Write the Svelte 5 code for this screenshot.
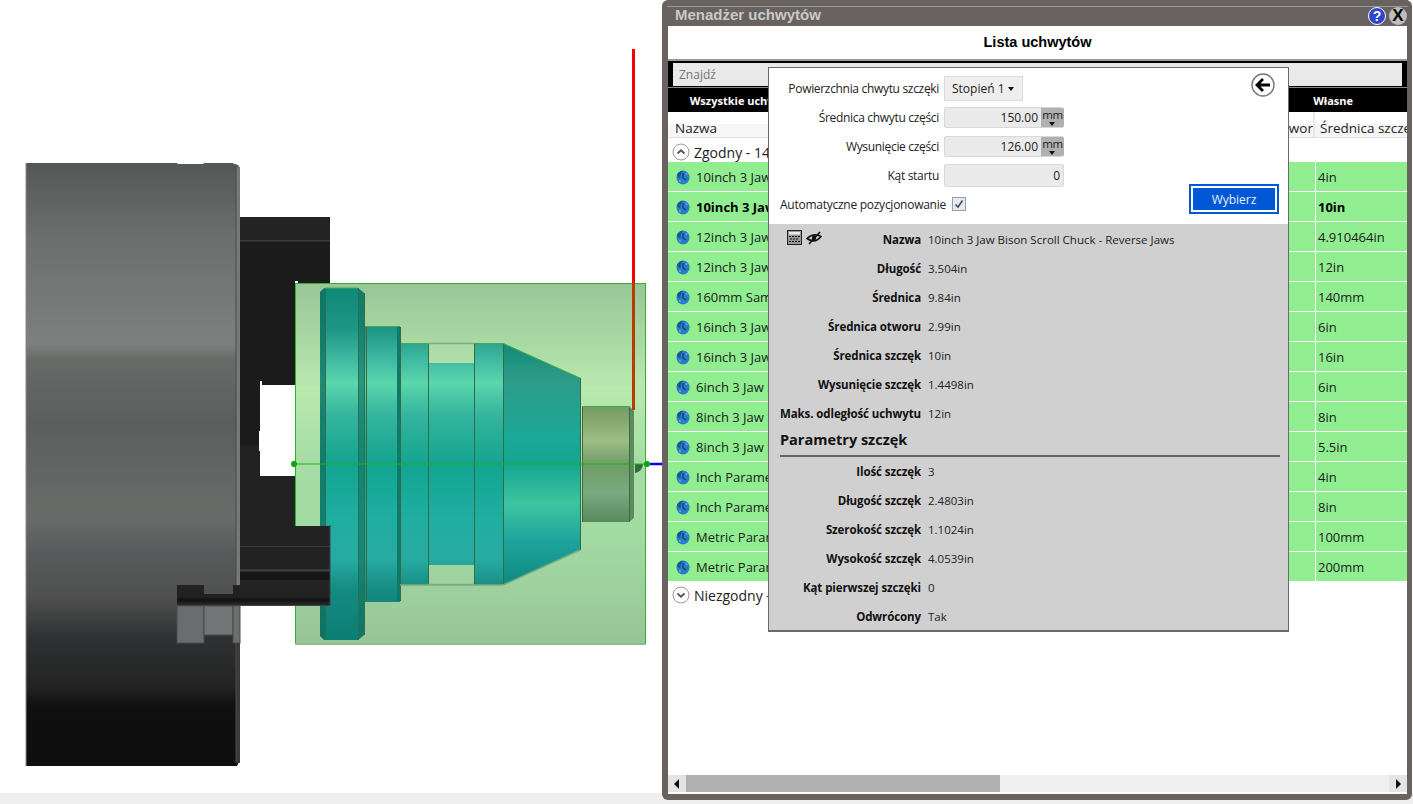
<script>
  const rows = [
    ['10inch 3 Jaw Bison Scroll Chuck', '4in', false],
    ['10inch 3 Jaw Bison Scroll Chuck - Reverse Jaws', '10in', true],
    ['12inch 3 Jaw Scroll Chuck', '4.910464in', false],
    ['12inch 3 Jaw Scroll Chuck - Reverse', '12in', false],
    ['160mm Sample Chuck', '140mm', false],
    ['16inch 3 Jaw Scroll Chuck', '6in', false],
    ['16inch 3 Jaw Scroll Chuck - Reverse', '16in', false],
    ['6inch 3 Jaw Scroll Chuck', '6in', false],
    ['8inch 3 Jaw Scroll Chuck', '8in', false],
    ['8inch 3 Jaw Scroll Chuck - Reverse', '5.5in', false],
    ['Inch Parametric Chuck', '4in', false],
    ['Inch Parametric Chuck - Reverse', '8in', false],
    ['Metric Parametric Chuck', '100mm', false],
    ['Metric Parametric Chuck - Reverse', '200mm', false]
  ];
  const general = [
    ['Nazwa', '10inch 3 Jaw Bison Scroll Chuck - Reverse Jaws'],
    ['Długość', '3.504in'],
    ['Średnica', '9.84in'],
    ['Średnica otworu', '2.99in'],
    ['Średnica szczęk', '10in'],
    ['Wysunięcie szczęk', '1.4498in'],
    ['Maks. odległość uchwytu', '12in']
  ];
  const jaws = [
    ['Ilość szczęk', '3'],
    ['Długość szczęk', '2.4803in'],
    ['Szerokość szczęk', '1.1024in'],
    ['Wysokość szczęk', '4.0539in'],
    ['Kąt pierwszej szczęki', '0'],
    ['Odwrócony', 'Tak']
  ];
  const tabs = ['Wszystkie uchwyty', 'Tokarskie', 'Frezarskie', 'Domyślne', 'Własne'];
  const teal = 'url(#teal)';
</script>

<div class="page">
  <div class="top">
    <svg class="scene" width="662" height="793" viewBox="0 0 662 793">
      <defs>
        <linearGradient id="body" gradientUnits="userSpaceOnUse" x1="0" y1="163" x2="0" y2="766">
          <stop offset="0" stop-color="#555757"/>
          <stop offset="0.04" stop-color="#5d5f5f"/>
          <stop offset="0.12" stop-color="#6c6e6e"/>
          <stop offset="0.3" stop-color="#7e807f"/>
          <stop offset="0.325" stop-color="#686a68"/>
          <stop offset="0.43" stop-color="#5c5e5e"/>
          <stop offset="0.59" stop-color="#6a6c6a"/>
          <stop offset="0.63" stop-color="#5c5e5f"/>
          <stop offset="0.72" stop-color="#4e4f4e"/>
          <stop offset="0.79" stop-color="#2f3031"/>
          <stop offset="0.87" stop-color="#222322"/>
          <stop offset="0.9" stop-color="#101010"/>
          <stop offset="1" stop-color="#0e0e0e"/>
        </linearGradient>
        <linearGradient id="box" gradientUnits="userSpaceOnUse" x1="0" y1="283" x2="0" y2="645">
          <stop offset="0" stop-color="#99c598"/>
          <stop offset="0.15" stop-color="#a8d8a2"/>
          <stop offset="0.29" stop-color="#b9e9af"/>
          <stop offset="0.5" stop-color="#a6dda4"/>
          <stop offset="0.7" stop-color="#a2dba2"/>
          <stop offset="1" stop-color="#98c498"/>
        </linearGradient>
        <linearGradient id="teal" gradientUnits="userSpaceOnUse" x1="0" y1="288" x2="0" y2="640">
          <stop offset="0" stop-color="#0f8877"/>
          <stop offset="0.12" stop-color="#1f9786"/>
          <stop offset="0.2" stop-color="#3fb8a0"/>
          <stop offset="0.27" stop-color="#5ad6ad"/>
          <stop offset="0.36" stop-color="#35b59d"/>
          <stop offset="0.5" stop-color="#13a491"/>
          <stop offset="0.66" stop-color="#20aea0"/>
          <stop offset="0.77" stop-color="#27aba2"/>
          <stop offset="0.86" stop-color="#148a80"/>
          <stop offset="1" stop-color="#0c7e74"/>
        </linearGradient>
        <linearGradient id="cone" gradientUnits="userSpaceOnUse" x1="0" y1="343" x2="0" y2="585">
          <stop offset="0" stop-color="#128a78"/>
          <stop offset="0.15" stop-color="#2d9c88"/>
          <stop offset="0.4" stop-color="#1aa896"/>
          <stop offset="0.5" stop-color="#14a592"/>
          <stop offset="0.66" stop-color="#3ec4a0"/>
          <stop offset="0.82" stop-color="#1ea39c"/>
          <stop offset="1" stop-color="#0f8a80"/>
        </linearGradient>
        <linearGradient id="stub" gradientUnits="userSpaceOnUse" x1="0" y1="406" x2="0" y2="522">
          <stop offset="0" stop-color="#749a62"/>
          <stop offset="0.3" stop-color="#9dbd86"/>
          <stop offset="0.5" stop-color="#6f9d66"/>
          <stop offset="0.75" stop-color="#7aaa80"/>
          <stop offset="1" stop-color="#588a5e"/>
        </linearGradient>
        <linearGradient id="base" gradientUnits="userSpaceOnUse" x1="0" y1="585" x2="0" y2="605">
          <stop offset="0" stop-color="#242424"/>
          <stop offset="0.6" stop-color="#202020"/>
          <stop offset="0.75" stop-color="#111"/>
          <stop offset="1" stop-color="#2a2a2a"/>
        </linearGradient>
      </defs>

      <!-- chuck body -->
      <path d="M26 163H177L178 164H203L204 163H232L238 165L240 168V760L237 766H26Z" fill="url(#body)"/>
      <path d="M26 163V766" stroke="#8a8a8a" stroke-width="1"/>
      <rect x="236" y="167" width="4" height="418" fill="#777878"/>
      <rect x="236" y="643" width="4" height="120" fill="#3a3a3a"/>
      <path d="M236 167V763" stroke="#4a4a4a" stroke-width="1"/>

      <!-- spindle between jaws -->
      <path d="M240 241H330V284H298V281H295V385H262V381H260V476H296V526H240Z" fill="#1b1b1b"/>
      <rect x="240" y="217" width="90" height="23" fill="#232323"/>
      <rect x="240" y="240" width="90" height="1.500" fill="#3c3c3c"/>
      <rect x="240" y="446" width="20" height="30" fill="#222"/>
      <rect x="240" y="476" width="56" height="50" fill="#222"/>
      <rect x="259" y="431" width="1" height="20" fill="#fff"/>

      <!-- translucent stock box -->
      <rect x="295.500" y="283.500" width="350" height="361" fill="url(#box)" stroke="#2fb32f"/>
      <rect x="295" y="643" width="351" height="2" fill="#8dbb8d"/>

      <!-- turned part -->
      <path d="M324 288H358L364 293V635L358 640H324L320 636V292Z" fill={teal}/>
      <path d="M320 292L325 288V640L320 636Z" fill="#0e7060" opacity=".75"/>
      <path d="M358 288L364 293V635L358 640Z" fill="#0e7565" opacity=".65"/>
      <rect x="364" y="326" width="36" height="276" fill={teal}/>
      <rect x="397" y="327" width="3" height="274" fill="#0f7a68"/>
      <rect x="400" y="343" width="28" height="242" fill={teal}/>
      <rect x="428" y="363" width="46" height="202" fill={teal}/>
      <rect x="474" y="343" width="29" height="242" fill={teal}/>
      <path d="M503 343L580 378V550L503 585Z" fill="url(#cone)"/>
      <rect x="582" y="406" width="48" height="116" fill="url(#stub)"/>
      <path d="M629 406L634 411V518L629 522Z" fill="#5e8b5e"/>
      <path d="M635 455A9 9 0 0 1 643 464H635Z" fill="#a9d6a9"/>
      <path d="M635 464H643A9 9 0 0 1 635 473Z" fill="#2f6b3f"/>

      <g stroke="#336d45" stroke-width="1" fill="none">
        <path d="M325.500 288V640M358.500 288V640M364.500 293V635M366.500 327V601"/>
        <path d="M400.500 327V601M428.500 343V585M474.500 343V585M503.500 343V585"/>
        <path d="M580.500 378V550M582.500 406V522M629.500 408V522"/>
      </g>
      <g stroke="#43ad4b" stroke-width="1" fill="none">
        <path d="M325 288H358M365 326.500H399M401 343.500H428M474 343.500H503L580 378M582 406.500H630"/>
      </g>
      <g stroke="#7fa783" stroke-width="1.500" fill="none">
        <path d="M428 343.500H474M428 584.500H474M400 585H503M503 585L580 550"/>
      </g>

      <!-- lower jaw -->
      <rect x="240" y="526" width="90" height="60" fill="#222"/>
      <rect x="240" y="546" width="90" height="1" fill="#3b3b3b"/>
      <rect x="240" y="569" width="90" height="2.500" fill="#3b3b3b"/>
      <rect x="240" y="572" width="90" height="8" fill="#161616"/>
      <path d="M177 585H204V594H233V585H240V584H330V605H177Z" fill="url(#base)"/>
      <path d="M177 605.500H330M330 525V605" stroke="#3f4146" fill="none"/>
      <rect x="177" y="606" width="27" height="37" fill="#6b6c6d" stroke="#4a4b4c"/>
      <rect x="204" y="606" width="29" height="29" fill="#737475" stroke="#4a4b4c"/>
      <rect x="233" y="606" width="7" height="37" fill="#6c6d6d" stroke="#4a4b4c"/>

      <!-- axes -->
      <path d="M633.500 49V283" stroke="#ff0000" stroke-width="3"/>
      <path d="M633.500 283V410" stroke="#b63d00" stroke-width="3"/>
      <path d="M294 464H646" stroke="#1cb51c" stroke-width="1"/>
      <circle cx="294" cy="464" r="3" fill="#0ba50b"/>
      <circle cx="647" cy="464" r="3" fill="#0ba50b"/>
      <path d="M650 464H662" stroke="#0000ff" stroke-width="2.500"/>
    </svg>

    <section class="window">
      <header class="titlebar">
        <span class="wintitle">Menadżer uchwytów</span>
        <span class="winbtns">
          <span class="help">?</span>
          <span class="close">X</span>
        </span>
      </header>

      <div class="content">
        <div class="heading">Lista uchwytów</div>
        <div class="search"><div class="searchbox">Znajdź</div></div>
        <nav class="tabs">
          {#each tabs as t}<span class="tab">{t}</span>{/each}
        </nav>
        <div class="thead">
          <span class="th">Nazwa</span>
          <span class="th mid">Średnica otworu</span>
          <span class="th last">Średnica szczęk</span>
        </div>
        <div class="group">
          <span class="toggle">
            <svg width="18" height="18" viewBox="0 0 18 18"><circle cx="9" cy="9" r="8" fill="#fff" stroke="#9a9a9a"/><path d="M5.500 10.500L9 7.300L12.500 10.500" fill="none" stroke="#555" stroke-width="1.800"/></svg>
          </span>
          Zgodny - 14
        </div>
        <div class="rows">
          {#each rows as r}
            <div class="row" class:bold={r[2]}>
              <span class="namecell">
                <svg class="globe" width="14" height="15" viewBox="0 0 14 15">
                  <ellipse cx="7" cy="7.500" rx="6.500" ry="7" fill="#2a7cc4"/>
                  <path d="M1 5Q3 1 7 .8Q4 4 4.500 8Q2 8 1 5Z" fill="#1a5590"/>
                  <path d="M7 3V8L10 10" fill="none" stroke="#0e3f70" stroke-width="1.300"/>
                  <circle cx="10.500" cy="4" r="1" fill="#6aa9dc"/>
                  <circle cx="4" cy="11" r="1" fill="#6aa9dc"/>
                </svg>
                {r[0]}
              </span>
              <span class="valcell">{r[1]}</span>
            </div>
          {/each}
        </div>
        <div class="group off">
          <span class="toggle">
            <svg width="18" height="18" viewBox="0 0 18 18"><circle cx="9" cy="9" r="8" fill="#fff" stroke="#9a9a9a"/><path d="M5.500 7.500L9 10.700L12.500 7.500" fill="none" stroke="#555" stroke-width="1.800"/></svg>
          </span>
          Niezgodny - 0
        </div>
        <div class="grow"></div>
        <div class="scrollbar">
          <span class="sbtn"><svg width="6" height="10" viewBox="0 0 6 10"><path d="M5 0V10L0 5Z" fill="#111"/></svg></span>
          <span class="track"><span class="thumb"></span></span>
          <span class="sbtn"><svg width="6" height="10" viewBox="0 0 6 10"><path d="M1 0V10L6 5Z" fill="#111"/></svg></span>
        </div>
      </div>

      <div class="panel">
        <div class="form">
          <span class="lab">Powierzchnia chwytu szczęki</span>
          <div class="select">Stopień 1 <i class="caret"></i></div>
          <span class="lab">Średnica chwytu części</span>
          <div class="field unit"><span class="num">150.00</span><span class="mm">mm<i class="mini"></i></span></div>
          <span class="lab">Wysunięcie części</span>
          <div class="field unit"><span class="num">126.00</span><span class="mm">mm<i class="mini"></i></span></div>
          <span class="lab">Kąt startu</span>
          <div class="field tall"><span class="num">0</span></div>
        </div>
        <div class="autorow">
          <span class="autolabel">Automatyczne pozycjonowanie</span>
          <span class="check">
            <svg width="10" height="10" viewBox="0 0 10 10"><path d="M1.500 5.500L4 8L8.500 1.500" fill="none" stroke="#3d4a5a" stroke-width="1.500"/></svg>
          </span>
          <span class="pick"><span class="pickin">Wybierz</span></span>
        </div>
        <span class="back">
          <svg width="24" height="24" viewBox="0 0 24 24">
            <circle cx="12" cy="12" r="11" fill="#fff" stroke="#777" stroke-width="1.400"/>
            <path d="M19 12H7M12 6L6 12L12 18" fill="none" stroke="#000" stroke-width="2.800"/>
          </svg>
        </span>

        <div class="details">
          <div class="tools">
            <svg width="15" height="15" viewBox="0 0 15 15">
              <rect x=".5" y=".5" width="14" height="14" fill="#9a9a9a" stroke="#222"/>
              <rect x="2" y="2" width="11" height="2.500" fill="#ececec"/>
              <path d="M2 6.500h2M5 6.500h2M8 6.500h2M11 6.500h2M3 9h2M6 9h2M9 9h2M2 11.500h2M5 11.500h2M8 11.500h2M11 11.500h2" stroke="#111" stroke-width="1.200"/>
            </svg>
            <svg width="16" height="14" viewBox="0 0 16 14">
              <path d="M1 7.500Q7.500 1.500 15 5.500Q9 13 1 7.500Z" fill="none" stroke="#111" stroke-width="1.700"/>
              <circle cx="8" cy="7" r="2.200" fill="#111"/>
              <path d="M3 13L14 1" stroke="#111" stroke-width="1.700"/>
            </svg>
          </div>
          <div class="dl">
            {#each general as d}
              <span class="dt">{d[0]}</span><span class="dd">{d[1]}</span>
            {/each}
          </div>
          <h3 class="section">Parametry szczęk</h3>
          <div class="dl second">
            {#each jaws as d}
              <span class="dt">{d[0]}</span><span class="dd">{d[1]}</span>
            {/each}
          </div>
        </div>
      </div>
    </section>
  </div>
  <div class="strip"></div>
</div>

<style>
  :global(body) {
    margin: 0;
    background: #fff;
    overflow: hidden;
  }
  .page {
    position: relative;
    width: 1413px;
    height: 804px;
    font-family: "Open Sans", "Noto Sans", sans-serif;
    color: #111;
    overflow: hidden;
  }
  .top {
    height: 793px;
  }
  .scene {
    display: block;
  }
  .strip {
    height: 11px;
    background: #efefef;
  }
  .window {
    position: absolute;
    left: 662px;
    top: 0;
    width: 750px;
    height: 800px;
    box-sizing: border-box;
    background: #686260;
    border-radius: 6px;
    padding: 0 5px 6px 6px;
    display: flex;
    flex-direction: column;
  }
  .titlebar {
    height: 26px;
    flex: none;
    box-sizing: border-box;
    margin: 0 -1px;
    padding: 6px 0 0 8px;
    display: flex;
    justify-content: space-between;
    position: relative;
    background: linear-gradient(#686260 6px, #9b9795 6px, #9b9795 7px, #686260 7px);
  }
  .wintitle {
    font: bold 15px "Liberation Sans", Arial, sans-serif;
    color: #c9c9c9;
    line-height: 18px;
  }
  .winbtns {
    display: flex;
    gap: 3px;
    margin-top: 1px;
    margin-right: 1px;
  }
  .help, .close {
    width: 18px;
    height: 18px;
    box-sizing: border-box;
    border-radius: 50%;
    font: bold 14px/16px "Liberation Sans", Arial, sans-serif;
    text-align: center;
  }
  .help {
    background: #2e45d0;
    border: 1px solid #fff;
    color: #fff;
  }
  .close {
    background: #bdbdbd;
    color: #000;
    font-size: 17px;
    line-height: 18px;
  }
  .content {
    flex: 1;
    background: #fff;
    display: flex;
    flex-direction: column;
    min-height: 0;
    overflow: hidden;
  }
  .heading {
    height: 35px;
    box-sizing: border-box;
    font: bold 14.500px/33px "Liberation Sans", Arial, sans-serif;
    color: #000;
    text-align: center;
    border-bottom: 2px solid #9a9a9a;
    flex: none;
  }
  .search {
    height: 26px;
    box-sizing: border-box;
    background: #000;
    padding: 2px 5px 1px 5px;
    flex: none;
  }
  .searchbox {
    height: 23px;
    background: #e9e9e9;
    color: #777;
    font-size: 12px;
    line-height: 24px;
    padding-left: 6px;
  }
  .tabs {
    height: 25px;
    box-sizing: border-box;
    border-top: 1px solid #888;
    background: #000;
    display: grid;
    grid-template-columns: repeat(5, 1fr);
    flex: none;
  }
  .tab {
    color: #fff;
    font-size: 11px;
    font-weight: 700;
    line-height: 26px;
    text-align: center;
    white-space: nowrap;
  }
  .thead {
    height: 26px;
    flex: none;
    display: grid;
    grid-template-columns: 550px 95px 1fr;
    box-sizing: border-box;
    padding-top: 8px;
    border-bottom: 1px solid #e2e2e2;
    background: linear-gradient(#fff 12px, #f6f6f6 12px);
  }
  .th {
    font-size: 13.500px;
    color: #222;
    line-height: 16px;
    padding-left: 7px;
    overflow: hidden;
    white-space: nowrap;
  }
  .th.mid {
    padding-left: 0;
  }
  .th.last {
    border-left: 2px solid #e8e8e8;
    margin-top: -8px;
    padding-top: 8px;
    padding-left: 5px;
  }
  .group {
    height: 24px;
    flex: none;
    font-size: 14px;
    color: #222;
    display: flex;
    align-items: center;
    gap: 3px;
    padding: 4px 0 0 3px;
    box-sizing: border-box;
  }
  .group.off {
    height: 26px;
    padding-top: 0;
  }
  .toggle {
    width: 18px;
    height: 18px;
    display: block;
    margin: 0 1px;
  }
  .toggle svg { display: block; }
  .rows {
    flex: none;
  }
  .row {
    height: 30px;
    box-sizing: border-box;
    background: #90ee90;
    border-bottom: 1px solid #fff;
    display: grid;
    grid-template-columns: 647px 1fr;
    font-size: 13px;
    line-height: 29px;
    color: #1a1a1a;
  }
  .row.bold {
    font-weight: 700;
    color: #000;
  }
  .namecell {
    display: flex;
    align-items: center;
    gap: 6px;
    padding: 0 0 0 8px;
    white-space: nowrap;
    overflow: hidden;
    line-height: 31px;
  }
  .globe { flex: none; }
  .valcell {
    border-left: 1px solid #fff;
    padding-left: 2px;
    line-height: 31px;
  }
  .grow { flex: 1; }
  .scrollbar {
    height: 17px;
    flex: none;
    display: flex;
    margin-bottom: 2px;
    background: #f0f0f0;
  }
  .sbtn {
    width: 18px;
    display: flex;
    align-items: center;
    justify-content: center;
    background: #e4e4e4;
    flex: none;
  }
  .track {
    flex: 1;
    display: block;
  }
  .thumb {
    display: block;
    width: 314px;
    height: 100%;
    background: #b0b0b0;
  }
  .panel {
    position: absolute;
    left: 106px;
    top: 67px;
    width: 521px;
    height: 565px;
    box-sizing: border-box;
    background: #fff;
    border: 1px solid #6a6a6a;
    border-bottom-width: 2px;
    font-size: 12px;
    color: #222;
  }
  .form {
    display: grid;
    grid-template-columns: 170px 120px;
    column-gap: 5px;
    grid-auto-rows: 21px;
    row-gap: 8px;
    padding-top: 10px;
    align-items: center;
  }
  .lab {
    text-align: right;
    white-space: nowrap;
    letter-spacing: -0.320px;
  }
  .select {
    width: 79px;
    height: 25px;
    box-sizing: border-box;
    background: #eee;
    border: 1px solid #dcdcdc;
    line-height: 23px;
    padding-left: 7px;
  }
  .caret {
    display: inline-block;
    border: 3px solid transparent;
    border-top: 4px solid #111;
    border-bottom: 0;
    margin-left: 0;
    vertical-align: 2px;
  }
  .field {
    height: 21px;
    box-sizing: border-box;
    background: #eaeaea;
    border: 1px solid #d8d8d8;
    border-radius: 2px;
    display: flex;
    line-height: 19px;
  }
  .field.tall {
    height: 23px;
    line-height: 21px;
  }
  .num {
    flex: 1;
    text-align: right;
    padding-right: 3px;
  }
  .unit .mm {
    width: 23px;
    margin-right: -1px;
    background: #b0b0b0;
    font-size: 11.500px;
    line-height: 13px;
    text-align: center;
    position: relative;
    border-radius: 0 2px 2px 0;
    letter-spacing: -0.300px;
  }
  .mini {
    position: absolute;
    left: 8px;
    bottom: 1px;
    border: 3.500px solid transparent;
    border-top: 4px solid #111;
    border-bottom: 0;
  }
  .autorow {
    height: 30px;
    margin-top: 3px;
    padding-left: 11px;
    display: flex;
    align-items: center;
    position: relative;
  }
  .autolabel {
    letter-spacing: -0.260px;
  }
  .check {
    width: 14px;
    height: 14px;
    box-sizing: border-box;
    margin-left: 6px;
    background: #e6e9ee;
    border: 1px solid #9aa0a8;
    display: flex;
    align-items: center;
    justify-content: center;
  }
  .pick {
    position: absolute;
    left: 420px;
    top: -5px;
    width: 90px;
    height: 30px;
    box-sizing: border-box;
    border: 2px solid #0058d6;
    padding: 2px;
  }
  .pickin {
    display: block;
    height: 100%;
    background: #0058d6;
    color: #e8f0ff;
    text-align: center;
    line-height: 24px;
    font-size: 12px;
  }
  .back {
    position: absolute;
    left: 482px;
    top: 5px;
    display: block;
    height: 24px;
  }
  .back svg { display: block; }
  .details {
    position: absolute;
    left: 0;
    right: 0;
    top: 156px;
    bottom: 0;
    background: #d0d0d0;
    font-size: 11.500px;
  }
  .tools {
    position: absolute;
    left: 18px;
    top: 6px;
    display: flex;
    align-items: center;
    gap: 4px;
  }
  .tools svg { display: block; }
  .dl {
    display: grid;
    grid-template-columns: 152px 1fr;
    column-gap: 7px;
    grid-auto-rows: 29px;
    line-height: 29px;
    padding-top: 1px;
  }
  .dt {
    font-weight: 700;
    text-align: right;
    white-space: nowrap;
    color: #111;
    letter-spacing: -0.100px;
  }
  .dd { color: #222; white-space: nowrap; }
  .section {
    margin: 0 8px 0 11px;
    height: 29px;
    box-sizing: border-box;
    font: bold 14.500px/22px "Open Sans", "Noto Sans", sans-serif;
    color: #111;
    border-bottom: 2px solid #666;
    padding-top: 1px;
  }
  .second {
    padding-top: 0;
  }
</style>
